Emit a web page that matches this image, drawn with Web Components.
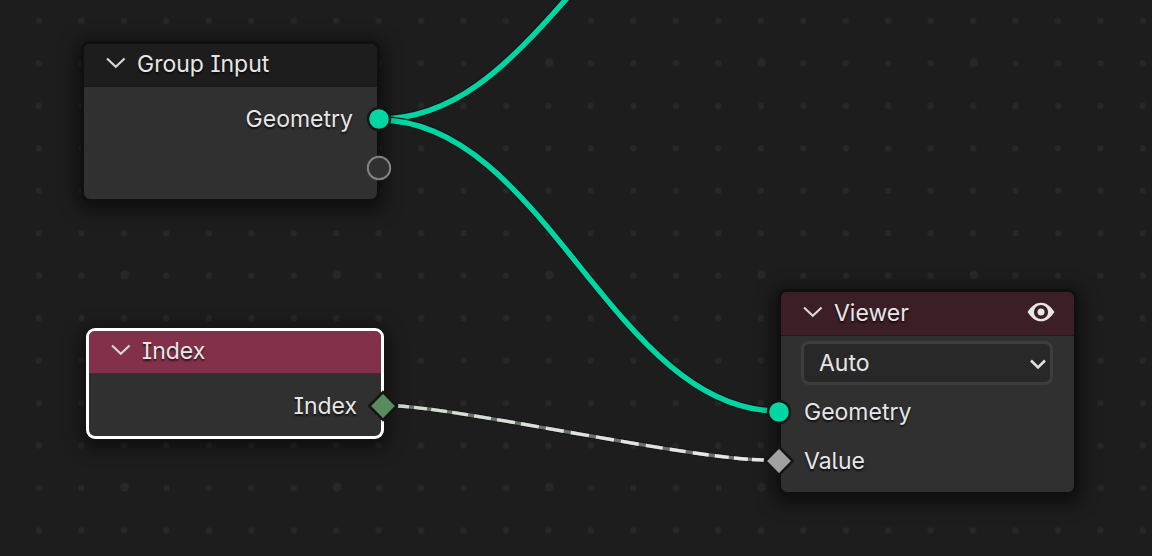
<!DOCTYPE html>
<html lang="en">
<head>
<meta charset="utf-8">
<title>Geometry Nodes</title>
<style>
  html, body { margin: 0; background: #1d1d1d; }
  body { min-height: 100vh; display: flex; }
  node-canvas { flex: 1; }
  graph-node.group { left: 81px; top: 41px; }
  graph-node.index { left: 86px; top: 328px; }
  graph-node.viewer { left: 778px; top: 289px; }
</style>
</head>
<body>
<node-canvas>
  <node-links></node-links>
  <graph-node class="group" name="Group Input" tone="input">
    <node-socket side="out" kind="geometry">Geometry</node-socket>
    <node-socket side="out" kind="empty"></node-socket>
  </graph-node>
  <graph-node class="index" name="Index" tone="field" selected>
    <node-socket side="out" kind="integer">Index</node-socket>
  </graph-node>
  <graph-node class="viewer" name="Viewer" tone="output" preview>
    <node-select label="Domain" value="Auto"></node-select>
    <node-socket side="in" kind="geometry">Geometry</node-socket>
    <node-socket side="in" kind="value">Value</node-socket>
  </graph-node>
</node-canvas>

<script>
function shadow(host, html) {
  const root = host.attachShadow({ mode: 'open' });
  const t = document.createElement('template');
  t.innerHTML = html;
  root.append(t.content.cloneNode(true));
  return root;
}

/* Editor surface with the dot grid */
class NodeCanvas extends HTMLElement {
  constructor() {
    super();
    shadow(this, `
      <style>
        :host { display: block; position: relative; overflow: hidden; background: #1d1d1d;
          color: #e6e6e6; font: 23px/32px Inter, "Liberation Sans", sans-serif;
          font-feature-settings: "cv05", "cv08"; }
        .grid { position: absolute; inset: 0; width: 100%; height: 100%; }
      </style>
      <svg class="grid" aria-hidden="true">
        <defs>
          <pattern id="minor" x="17.8" y="-0.2" width="42.46" height="42.46" patternUnits="userSpaceOnUse">
            <circle cx="21.2" cy="21.2" r="3.1" fill="#282828"/>
          </pattern>
          <pattern id="major" x="18.6" y="-43.7" width="212.3" height="212.3" patternUnits="userSpaceOnUse">
            <circle cx="106.2" cy="106.2" r="4.2" fill="#282828"/>
          </pattern>
        </defs>
        <rect width="100%" height="100%" fill="url(#minor)"/>
        <rect width="100%" height="100%" fill="url(#major)"/>
      </svg>
      <slot></slot>`);
  }
}

/* Noodles that join the sockets */
class NodeLinks extends HTMLElement {
  constructor() {
    super();
    shadow(this, `
      <style>
        :host { display: block; position: absolute; inset: 0; }
        svg { display: block; width: 100%; height: 100%; }
        path { fill: none; }
        .edge { stroke: #161616; stroke-width: 8; }
        .geo { stroke: #00d6a3; stroke-width: 5.4; }
      </style>
      <svg aria-hidden="true">
        <defs>
          <linearGradient id="fade" gradientUnits="userSpaceOnUse" x1="398" y1="0" x2="764" y2="0">
            <stop offset="0" stop-color="#cddccd"/><stop offset=".6" stop-color="#e0e5e0"/><stop offset="1" stop-color="#e8e8e8"/>
          </linearGradient>
        </defs>
        <path class="edge" d="M379 119C453 119 505 69 568 -3"/>
        <path class="geo" d="M379 119C453 119 505 69 568 -3"/>
        <path class="edge" d="M379 120C544 120 614 411 778 411"/>
        <path class="geo" d="M379 120C544 120 614 411 778 411"/>
        <path stroke="#141414" stroke-width="5" d="M398 406C470 410 690 459 764 460"/>
        <path stroke="#6c6f6c" stroke-width="3.4" d="M398 406C470 410 690 459 764 460"/>
        <path stroke="url(#fade)" stroke-width="3.4" pathLength="366"
          stroke-dasharray="11 5 13 4 16 5 16 6 17 6 18 6 18 7 18 7 18 7 18 7 18 7 17 7 16 7 16 6 14 5 14 4 12 9"
          d="M398 406C470 410 690 459 764 460"/>
      </svg>`);
  }
}

/* Node frame: header with collapse arrow, body with rows */
class GraphNode extends HTMLElement {
  constructor() {
    super();
    const eye = this.hasAttribute('preview') ? `
      <button class="eye" aria-label="Toggle preview">
        <svg width="28" height="22" viewBox="0 0 28 22">
          <path fill="#e6e6e6" fill-rule="evenodd" d="M.5 10C4.500 4 8.800 .7 14 .7S23.500 4 27.500 10C23.500 16 19.200 19.300 14 19.300S4.500 16 .5 10ZM14 2.900A7.100 7.100 0 1 0 14 17.100A7.100 7.100 0 1 0 14 2.900Z"/>
          <circle cx="14" cy="10" r="3.500" fill="#e6e6e6"/>
        </svg>
      </button>` : '';
    const root = shadow(this, `
      <style>
        :host { display: block; position: absolute; box-sizing: border-box; width: 299px;
          border: 3px solid #101010; border-radius: 9px; background: #303030;
          box-shadow: 0 4px 18px 4px rgba(0,0,0,.55); }
        :host([selected]) { border-color: #fff; width: 298px; }
        header { display: flex; align-items: center; height: 43px; box-sizing: border-box;
          padding: 0 19px 3px 20px; border-radius: 6px 6px 0 0; border-bottom: 1px solid #181818; }
        :host([tone=input]) header { background: #1d1d1d; }
        :host([tone=field]) header { background: #83314a; border-color: #4c2633; }
        :host([tone=output]) header { background: #3c1e26; border-color: #28161b; height: 44px; padding-bottom: 1px; }
        h2 { flex: 1; margin: 0 0 0 9px; font: inherit; text-shadow: 0 2px 2px rgba(0,0,0,.7); }
        button { border: 0; padding: 0; background: none; color: inherit; display: block; }
        .fold { width: 24px; height: 24px; }
        .eye { width: 28px; height: 22px; }
        svg { display: block; }
        .body { padding: 8px 0 6px; }
        :host([tone=field]) .body { padding-bottom: 5px; }
        :host([tone=output]) .body { padding-top: 5px; }
      </style>
      <header>
        <button class="fold" aria-label="Collapse node">
          <svg width="24" height="24" viewBox="0 0 24 24"><path d="M3 6.500L11.800 14.800L20.600 6.500" fill="none" stroke="#d6d6d6" stroke-width="2.200"/></svg>
        </button>
        <h2></h2>${eye}
      </header>
      <div class="body"><slot></slot></div>`);
    root.querySelector('h2').textContent = this.getAttribute('name');
  }
}

/* One socket row, its pin centred on the node's edge */
class NodeSocket extends HTMLElement {
  constructor() {
    super();
    const pins = {
      geometry: '<circle cx="15" cy="15" r="11" fill="#00d6a3" stroke="#151515" stroke-width="2.400"/>',
      empty: '<circle cx="15" cy="15" r="11.200" fill="#303030" stroke="#828282" stroke-width="2"/>',
      integer: '<path d="M15 1.200L28.800 15L15 28.800L1.200 15Z" fill="#598c5c" stroke="#151515" stroke-width="2.600"/>',
      value: '<path d="M15 1.200L28.800 15L15 28.800L1.200 15Z" fill="#a1a1a1" stroke="#151515" stroke-width="2.600"/>'
    };
    shadow(this, `
      <style>
        :host { display: block; position: relative; height: 49px; line-height: 48px; padding: 0 24px 0 23px;
          box-sizing: border-box; text-shadow: 0 2px 2px rgba(0,0,0,.7); }
        :host([side=out]) { text-align: right; }
        svg { position: absolute; top: 9px; width: 30px; height: 30px; overflow: visible; }
        :host([side=out]) svg { right: -17px; }
        :host([side=in]) svg { left: -17px; }
      </style>
      <slot></slot>
      <svg viewBox="0 0 30 30" aria-hidden="true">${pins[this.getAttribute('kind')]}</svg>`);
  }
}

/* Drop-down row */
class NodeSelect extends HTMLElement {
  constructor() {
    super();
    const root = shadow(this, `
      <style>
        :host { display: block; position: relative; margin: 0 21px 3px 20px; }
        select { appearance: none; display: block; width: 100%; height: 44px; box-sizing: border-box;
          margin: 0; padding: 0 40px 0 15px; border: 3px solid #3d3d3d; border-radius: 8px;
          background: #282828; color: inherit; font: inherit; font-feature-settings: inherit; }
        svg { position: absolute; right: 6px; top: 14px; pointer-events: none; }
      </style>
      <select><option></option></select>
      <svg width="18" height="18" viewBox="0 0 18 18" aria-hidden="true"><path d="M2 5.500L9 12.500L16 5.500" fill="none" stroke="#e0e0e0" stroke-width="2.600"/></svg>`);
    root.querySelector('select').setAttribute('aria-label', this.getAttribute('label'));
    root.querySelector('option').textContent = this.getAttribute('value');
  }
}

customElements.define('node-canvas', NodeCanvas);
customElements.define('node-links', NodeLinks);
customElements.define('graph-node', GraphNode);
customElements.define('node-socket', NodeSocket);
customElements.define('node-select', NodeSelect);
</script>
</body>
</html>
